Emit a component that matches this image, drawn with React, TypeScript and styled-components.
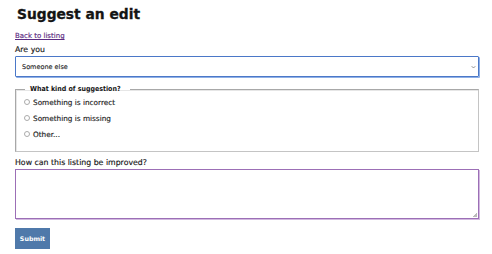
import React from 'react';
import styled, { createGlobalStyle } from 'styled-components';

const GlobalStyle = createGlobalStyle`
    html, body {
        margin: 0;
        padding: 0;
        background: #ffffff;
    }
    body {
        font-family: "DejaVu Sans", "Open Sans", sans-serif;
        color: #161616;
    }
`

const Spage = styled.div`
    width: 492px;
    padding: 5px 13px 0px 15px;
    box-sizing: border-box;
    display:flex;
    flex-direction:column;
`

const Stitle = styled.h1`
    margin: 0px 0px 0px 2px;
    font-size: 13.8px;
    line-height: 18px;
    font-weight: bold;
    color: #141414;
    -webkit-text-stroke: 0.3px #141414;
`

const Slink = styled.a`
    margin-top: 8px;
    font-size: 7px;
    line-height: 10px;
    color: #5b2b82;
    text-decoration: underline;
    align-self: flex-start;
    -webkit-text-stroke: 0.15px #5b2b82;
`

const Slabel = styled.label`
    display:block;
    font-size: 7.8px;
    line-height: 10px;
    -webkit-text-stroke: 0.15px #161616;
`

const Sfield = styled.div<{ $top: number }>`
    margin-top: ${(p) => p.$top}px;
    display:flex;
    flex-direction:column;
    gap: 1px;
`

const SselectBox = styled.div`
    height: 21px;
    border: 1px solid #4b78c8;
    box-shadow: 1px 1px 0px #8fb0e6;
    border-radius: 1px;
    display:flex;
    align-items:center;
    justify-content:space-between;
    padding: 0px 2px 0px 6px;
    box-sizing: border-box;
    font-size: 6.5px;
    color: #222;
    -webkit-text-stroke: 0.1px #222;
`

const Sfieldset = styled.fieldset`
    margin: 7px 0px 0px 0px;
    box-sizing: border-box;
    border: 1px solid #a8a8a8;
    border-right-color: #c4c4c4;
    border-bottom-color: #c4c4c4;
    box-shadow: inset 1px 1px 0px #e6e6e6;
    padding: 0px 8px 9px 8px;
`

const Slegend = styled.legend`
    margin-left: 1px;
    padding: 0px 9px 0px 5px;
    font-family: "DejaVu Sans Condensed", "DejaVu Sans", sans-serif;
    font-size: 7px;
    font-weight: bold;
    line-height: 10px;
`

const Soption = styled.label`
    display:flex;
    align-items:center;
    gap: 3px;
    height: 16px;
    font-size: 7.3px;
    color: #222;
    -webkit-text-stroke: 0.15px #222;
`

const Sradio = styled.span`
    width: 4px;
    height: 4px;
    border: 1px solid #ababab;
    border-radius: 50%;
`

const Stextarea = styled.div`
    height: 50px;
    border: 1px solid #9c6fb6;
    box-shadow: 1px 1px 0px #d2b9e0;
    box-sizing: border-box;
    position: relative;
`

const Sgrip = styled.span`
    position: absolute;
    right: 1px;
    bottom: 1px;
    width: 4px;
    height: 4px;
    background: linear-gradient(135deg, transparent 50%, #bbb 50%);
`

const Sbutton = styled.button`
    margin-top: 9px;
    align-self: flex-start;
    width: 35px;
    height: 21px;
    border: none;
    background-color: #4f79aa;
    box-shadow: 0px 1px 0px #c5d4e6;
    color: #ffffff;
    font-family: inherit;
    font-size: 6.3px;
    font-weight: bold;
    padding: 0px;
`

const Chevron: React.FC = () => (
    <svg width="5" height="4" viewBox="0 0 5 4">
        <path d="M0.7 1.2 L2.5 3 L4.3 1.2" fill="none" stroke="#777" strokeWidth="0.8" />
    </svg>
)

const options = ['Something is incorrect', 'Something is missing', 'Other...']

const App: React.FC = () => {
    return (
        <>
            <GlobalStyle />
            <Spage>
                <Stitle>Suggest an edit</Stitle>
                <Slink href="#">Back to listing</Slink>
                <Sfield $top={4}>
                    <Slabel>Are you</Slabel>
                    <SselectBox>
                        <span>Someone else</span>
                        <Chevron />
                    </SselectBox>
                </Sfield>
                <Sfieldset>
                    <Slegend>What kind of suggestion?</Slegend>
                    {options.map((o) => (
                        <Soption key={o}>
                            <Sradio />
                            {o}
                        </Soption>
                    ))}
                </Sfieldset>
                <Sfield $top={6}>
                    <Slabel>How can this listing be improved?</Slabel>
                    <Stextarea>
                        <Sgrip />
                    </Stextarea>
                </Sfield>
                <Sbutton>Submit</Sbutton>
            </Spage>
        </>
    );
};

export default App;
